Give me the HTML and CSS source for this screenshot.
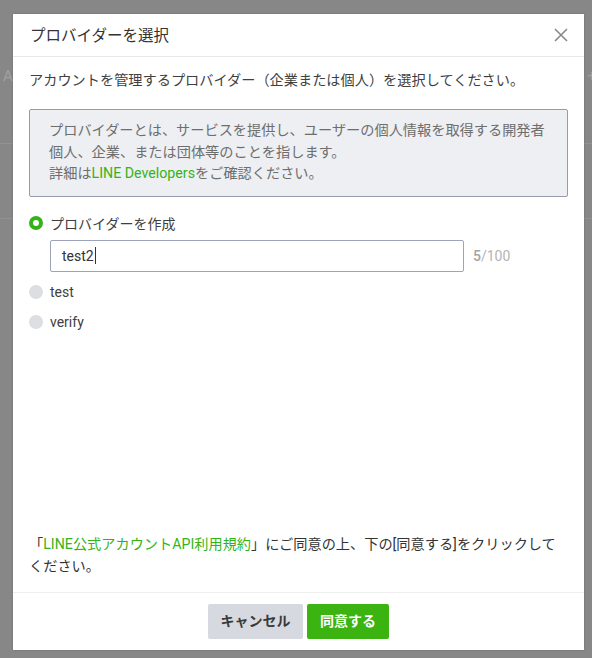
FILE: index.html
```html
<!DOCTYPE html>
<html lang="ja">
<head>
<meta charset="utf-8">
<title>プロバイダーを選択</title>
<link rel="stylesheet" href="styles.css">
</head>
<body>
<div class="backdrop">
  <div class="bd-row"><span>A</span><span>+</span></div>
  <div class="bd-line bd-line1"></div>
  <div class="bd-line bd-line2"></div>
</div>
<div class="modal">
  <div class="modal-header">
    <h1 class="modal-title">プロバイダーを選択</h1>
    <svg class="close" width="14" height="14" viewBox="0 0 14 14"><path d="M1 1 L13 13 M13 1 L1 13" stroke="#8a8a8a" stroke-width="1.6" fill="none"/></svg>
  </div>
  <div class="modal-body">
    <p class="lead">アカウントを管理するプロバイダー（企業または個人）を選択してください。</p>
    <div class="info">
      プロバイダーとは、サービスを提供し、ユーザーの個人情報を取得する開発者<br>
      個人、企業、または団体等のことを指します。<br>
      詳細は<span class="link">LINE Developers</span>をご確認ください。
    </div>
    <div class="options">
      <div class="option"><span class="radio checked"></span><span>プロバイダーを作成</span></div>
      <div class="input-row">
        <div class="input">test2<span class="caret"></span></div>
        <span class="counter"><b>5</b>/100</span>
      </div>
      <div class="option"><span class="radio"></span><span>test</span></div>
      <div class="option"><span class="radio"></span><span>verify</span></div>
    </div>
    <p class="terms">「<span class="link">LINE公式アカウントAPI利用規約</span>」にご同意の上、下の[同意する]をクリックしてください。</p>
  </div>
  <div class="modal-footer">
    <button class="btn btn-cancel">キャンセル</button>
    <button class="btn btn-ok">同意する</button>
  </div>
</div>
</body>
</html>
```
FILE: styles.css
```css
html, body {
  margin: 0;
  padding: 0;
}
body {
  width: 592px;
  height: 658px;
  overflow: hidden;
  background: #878787;
  font-family: Roboto, "Noto Sans CJK JP", sans-serif;
  position: relative;
}
.backdrop {
  padding-top: 66px;
  color: #a2a2a2;
  font-size: 15px;
}
.bd-row {
  display: flex;
  justify-content: space-between;
  padding: 0 0 0 3px;
  height: 20px;
  line-height: 20px;
  margin-right: -4px;
}
.bd-line {
  height: 1px;
  background: #929292;
}
.bd-line1 { margin-top: 57px; }
.bd-line2 { margin-top: 74px; }

.modal {
  position: absolute;
  left: 13px;
  top: 14px;
  width: 571px;
  height: 636px;
  background: #fff;
  display: flex;
  flex-direction: column;
  box-shadow: 0 0 2px rgba(0,0,0,0.2);
}
.modal-header {
  height: 42px;
  border-bottom: 1px solid #e8e8e8;
  display: flex;
  align-items: center;
  justify-content: space-between;
  padding: 0 17px 0 17px;
  box-sizing: content-box;
  flex: none;
}
.modal-title {
  margin: 0;
  font-size: 15.5px;
  font-weight: normal;
  color: #333;
  line-height: 20px;
  padding-top: 1px;
}
.close {
  display: block;
  margin-right: -1px;
}
.modal-body {
  flex: 1;
  padding: 13px 16px 15px 16px;
  display: flex;
  flex-direction: column;
}
.lead {
  margin: 0;
  font-size: 14.2px;
  line-height: 20px;
  color: #3f3f3f;
}
.info {
  margin-top: 19px;
  border: 1px solid #969bad;
  background: #edeff2;
  border-radius: 2px;
  padding: 10px 10px 11px 19px;
  font-size: 14.2px;
  line-height: 21.5px;
  color: #6e6e6e;
}
.link {
  color: #34b319;
}
.options {
  margin-top: 16px;
  display: flex;
  flex-direction: column;
}
.option {
  display: flex;
  align-items: center;
  height: 20px;
  font-size: 14px;
  color: #404040;
  gap: 7px;
}
.option + .option {
  margin-top: 10px;
}
.radio {
  width: 14px;
  height: 14px;
  border-radius: 50%;
  background: #dcdee2;
  box-sizing: border-box;
  flex: none;
}
.radio.checked {
  background: #fff;
  border: 4px solid #34b319;
}
.input-row {
  display: flex;
  align-items: center;
  margin: 7px 0 10px 21px;
  gap: 9px;
}
.input {
  width: 414px;
  height: 32px;
  box-sizing: border-box;
  border: 1px solid #9ea3b9;
  border-radius: 2px;
  padding: 0 11px;
  display: flex;
  align-items: center;
  font-size: 14px;
  color: #333;
}
.caret {
  display: inline-block;
  width: 1px;
  height: 17px;
  background: #333;
  margin-left: 1px;
}
.counter {
  font-size: 14px;
  color: #b3b3b3;
}
.counter b {
  font-weight: 500;
  color: #a5a5a5;
}
.terms {
  margin: auto 0 0 0;
  font-size: 14.2px;
  line-height: 22px;
  color: #333;
  padding-right: 4px;
}
.modal-footer {
  border-top: 1px solid #eeeeee;
  height: 58px;
  flex: none;
  display: flex;
  justify-content: center;
  align-items: flex-start;
  padding-top: 11px;
  box-sizing: border-box;
  gap: 4px;
}
.btn {
  height: 35px;
  border: none;
  border-radius: 2px;
  font-family: Roboto, "Noto Sans CJK JP", sans-serif;
  font-size: 14px;
  font-weight: bold;
  padding: 0 12px;
  line-height: 35px;
  white-space: nowrap;
  cursor: pointer;
}
.btn-cancel {
  background: #d6d9df;
  color: #3a3a3a;
  min-width: 95px;
}
.btn-ok {
  background: #3bb311;
  color: #fff;
  min-width: 82px;
}
```
